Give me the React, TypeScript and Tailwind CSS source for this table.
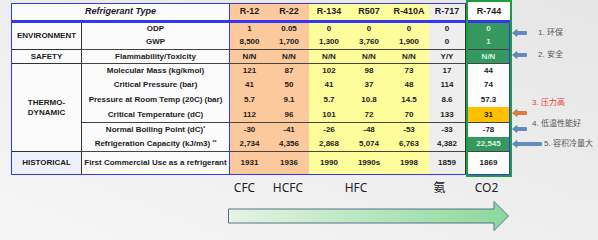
import { Fragment } from "react";

type Ref = { name: string; bg: string; w: string; values: string[]; edge?: boolean };

const refs: Ref[] = [
  { name: "R-12", bg: "bg-[#fbc99c]", w: "w-[39px]", values: ["1", "8,500", "N/N", "121", "41", "5.7", "112", "-30", "2,734", "1931"] },
  { name: "R-22", bg: "bg-[#fbc99c]", w: "w-[40px]", values: ["0.05", "1,700", "N/N", "87", "50", "9.1", "96", "-41", "4,356", "1936"] },
  { name: "R-134", bg: "bg-[#fdfd9c]", w: "w-[40px]", values: ["0", "1,300", "N/N", "102", "41", "5.7", "101", "-26", "2,868", "1990"] },
  { name: "R507", bg: "bg-[#fdfd9c]", w: "w-[40px]", values: ["0", "3,760", "N/N", "98", "37", "10.8", "72", "-48", "5,074", "1990s"] },
  { name: "R-410A", bg: "bg-[#fdfd9c]", w: "w-[40px]", values: ["0", "1,900", "N/N", "73", "48", "14.5", "70", "-53", "6,763", "1998"] },
  { name: "R-717", bg: "bg-[#eeeeee]", w: "w-[37px]", values: ["0", "0", "Y/Y", "17", "114", "8.6", "133", "-33", "4,382", "1859"], edge: true },
];

// heights line up with grid-rows below (data rows only)
const rowH = ["h-[12px]", "h-[15px]", "h-[14px]", "h-[14px]", "h-[14px]", "h-[15px]", "h-[16px]", "h-[14px]", "h-[15px]", "h-[22px]"];

type Row = { label: React.ReactNode; line?: boolean; section?: { text: React.ReactNode; span: string; line?: boolean; bg?: string } };

const rows: Row[] = [
  { label: "ODP", section: { text: "ENVIRONMENT", span: "row-span-2", line: true } },
  { label: "GWP", line: true },
  { label: "Flammability/Toxicity", line: true, section: { text: "SAFETY", span: "row-span-1", line: true } },
  {
    label: "Molecular Mass (kg/kmol)",
    section: { text: <>THERMO-<br />DYNAMIC</>, span: "row-span-6", line: true },
  },
  { label: "Critical Pressure (bar)" },
  { label: "Pressure at Room Temp (20C) (bar)" },
  { label: "Critical Temperature (dC)", line: true },
  { label: <>Normal Boiling Point (dC)<sup className="text-[5px]">*</sup></> },
  { label: <>Refrigeration Capacity (kJ/m3)&nbsp;<sup className="text-[5px]">**</sup></>, line: true },
  {
    label: "First Commercial Use as a refrigerant",
    section: { text: "HISTORICAL", span: "row-span-1", bg: "bg-[#eef0fb]" },
  },
];

// R-744 column: fill per row
const co2 = [
  { v: "0", c: "bg-[#35995f] text-[#dcefe1]" },
  { v: "1", c: "bg-[#35995f] text-[#dcefe1]" },
  { v: "N/N", c: "bg-[#35995f] text-[#dcefe1]" },
  { v: "44", c: "bg-white" },
  { v: "74", c: "bg-white" },
  { v: "57.3", c: "bg-white" },
  { v: "31", c: "bg-[#ffc000]" },
  { v: "-78", c: "bg-white" },
  { v: "22,545", c: "bg-[#35995f] text-[#dcefe1]" },
  { v: "1869", c: "bg-white" },
];

function Callout({ w = 15, color = "#5b8cc6", stroke = "#41709e" }: { w?: number; color?: string; stroke?: string }) {
  return (
    <svg width={w} height={8} viewBox={`0 0 ${w} 8`} className="shrink-0">
      <polygon
        points={`0.5,4 5,0.5 5,2.5 ${w - 0.5},2.5 ${w - 0.5},5.5 5,5.5 5,7.5`}
        fill={color}
        stroke={stroke}
        strokeWidth={0.6}
      />
    </svg>
  );
}

function Table() {
  return (
    <div className="ml-[11px] mt-[3px] grid h-[172px] grid-cols-[70px_148px_39px_40px_40px_40px_40px_37px_46px] grid-rows-[19px_12px_15px_14px_14px_14px_15px_16px_14px_15px_22px] border-y border-l border-[#3737f2] text-[#1c1c1c]">
      <div className="col-span-2 flex items-center justify-center border-b-[3px] border-r border-[#3737f2] bg-[#fbfbfb] text-[9px] font-bold italic">
        Refrigerant Type
      </div>
      {refs.map((r) => (
        <div
          key={r.name}
          className={`flex items-center justify-center border-b-[3px] border-[#3737f2] text-[9px] font-bold ${r.bg} ${r.edge ? "border-r border-r-[#333]" : ""}`}
        >
          {r.name}
        </div>
      ))}

      <div className="row-span-11 -mb-[3px] -mt-[4px] flex flex-col border-2 border-[#1f9c3e] bg-white">
        <div className="flex h-[21px] shrink-0 items-center justify-center border-b-[3px] border-[#3737f2] pt-[1px] text-[9px] font-bold">
          R-744
        </div>
        {co2.map((c, i) => (
          <div
            key={i}
            className={`flex shrink-0 items-center justify-center border-r border-r-[#3737f2] text-[8px] font-bold ${rowH[i]} ${c.c} ${rows[i].line ? "border-b border-b-[#444]" : ""}`}
          >
            {c.v}
          </div>
        ))}
        <div className="h-px shrink-0 bg-[#3737f2]" />
      </div>

      {rows.map((row, i) => (
        <Fragment key={i}>
          {row.section && (
            <div
              className={`flex items-center justify-center border-r border-[#333] text-center text-[8px] font-bold leading-[10px] ${row.section.span} ${row.section.bg ?? "bg-[#fbfbfb]"} ${row.section.line ? "border-b" : ""}`}
            >
              {row.section.text}
            </div>
          )}
          <div
            className={`flex items-center justify-center whitespace-nowrap border-r border-r-[#3737f2] bg-[#fbfbfb] text-[8px] font-bold ${row.line ? "border-b border-b-[#444]" : ""}`}
          >
            {row.label}
          </div>
          {refs.map((r) => (
            <div
              key={r.name}
              className={`flex items-center justify-center text-[8px] font-bold ${r.bg} ${row.line ? "border-b border-b-[#444]" : ""} ${r.edge ? "border-r border-r-[#333]" : ""}`}
            >
              {r.values[i]}
            </div>
          ))}
        </Fragment>
      ))}
    </div>
  );
}

export default function App() {
  return (
    <div className="flex h-[240px] w-[598px] flex-col overflow-hidden bg-linear-to-tr from-[#f6f6f6] to-[#e6e6e6] font-['Liberation_Sans',Arial,'Noto_Sans_CJK_SC',sans-serif]">
      <div className="flex h-[177px] shrink-0">
        <Table />
        <div className="flex w-[86px] flex-col text-[8px] leading-[10px] text-[#555] font-['Liberation_Sans','Noto_Sans_CJK_SC',sans-serif]">
          <div className="mt-[28px] flex h-[10px] items-center">
            <Callout />
            <span className="ml-[11px]">1. 环保</span>
          </div>
          <div className="mt-[12px] flex h-[10px] items-center">
            <Callout />
            <span className="ml-[11px]">2. 安全</span>
          </div>
          <div className="mt-[38px] h-[10px] pl-[20px] text-[#e8433a]">3. 压力高</div>
          <div className="mt-[1px] flex h-[8px] items-center">
            <Callout color="#e47a3d" stroke="#b85a25" />
          </div>
          <div className="mt-[2px] flex h-[14px]">
            <div className="self-end">
              <Callout />
            </div>
            <span className="ml-[5px] self-start whitespace-nowrap">4. 低温性能好</span>
          </div>
          <div className="mt-[6px] flex h-[10px] items-center">
            <Callout w={30} />
            <span className="ml-[2px] whitespace-nowrap">5. 容积冷量大</span>
          </div>
        </div>
      </div>

      <div className="mt-[4px] flex h-[14px] shrink-0 items-center pl-[224px] text-[12px] text-[#222] font-['Noto_Sans','Noto_Sans_CJK_SC',sans-serif]">
        <span className="flex w-[41px] justify-center">CFC</span>
        <span className="flex w-[46px] justify-center">HCFC</span>
        <span className="flex w-[90px] justify-center">HFC</span>
        <span className="flex w-[77px] justify-center">氨</span>
        <span className="flex w-[17px] justify-center">CO2</span>
      </div>

      <svg width={282} height={30} viewBox="0 0 282 30" className="ml-[228px] mt-[6px] shrink-0">
        <defs>
          <linearGradient id="flow" x1="0" y1="0" x2="1" y2="0">
            <stop offset="0" stopColor="#e4f4e4" />
            <stop offset="1" stopColor="#8bd89a" />
          </linearGradient>
        </defs>
        <polygon
          points="0.5,8 266,8 266,0.5 280.5,15 266,29.5 266,22 0.5,22"
          fill="url(#flow)"
          stroke="#56708e"
          strokeWidth={1}
        />
      </svg>
    </div>
  );
}
